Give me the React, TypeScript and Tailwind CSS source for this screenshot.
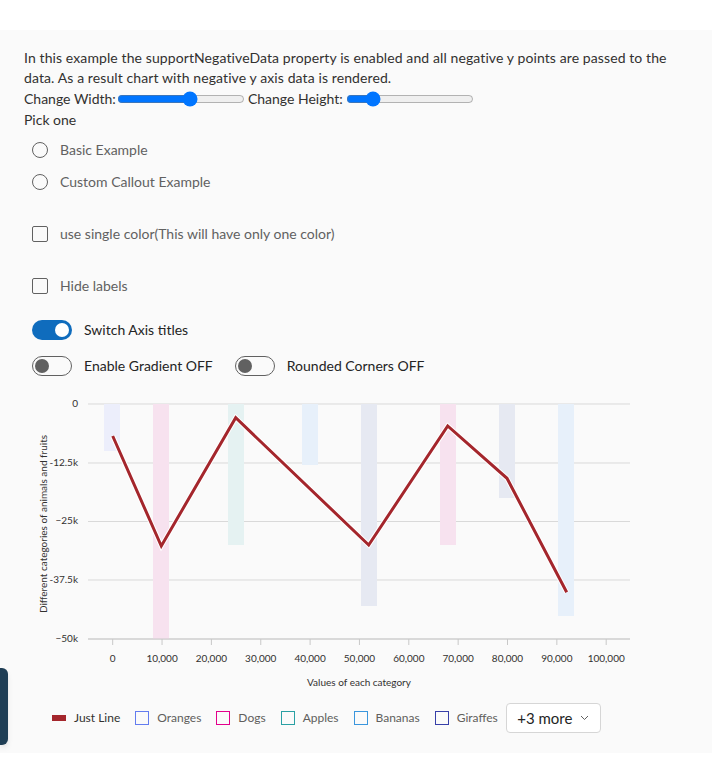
import React from 'react'

const font = { fontFamily: '"Segoe UI", Lato, "Noto Sans", sans-serif' }

const ticks = [0, 10000, 20000, 30000, 40000, 50000, 60000, 70000, 80000, 90000, 100000]
const x0 = 112.7
const step = 49.35

const yLabels = [
  { label: '0', y: 14 },
  { label: '-12.5k', y: 73 },
  { label: '−25k', y: 131.5 },
  { label: '-37.5k', y: 190 },
  { label: '−50k', y: 249 },
]

// bar rects in chart coordinates (top is y=14)
const bars = [
  { x: 104, h: 47, fill: '#eceefb' },
  { x: 153, h: 235, fill: '#f7e2ef' },
  { x: 228, h: 141, fill: '#e5f2f2' },
  { x: 302, h: 61, fill: '#e7f0fa' },
  { x: 361, h: 202, fill: '#e6e9f2' },
  { x: 440, h: 141, fill: '#f7e2ef' },
  { x: 499, h: 94, fill: '#e6e9f2' },
  { x: 558, h: 212, fill: '#e7f0fa' },
]

const points = [
  [112.7, 46],
  [161.3, 156],
  [235.7, 27.7],
  [368.7, 155],
  [447.7, 36],
  [507, 88.3],
  [566.7, 202.3],
]

const legend = [
  { name: 'Oranges', color: '#637cef' },
  { name: 'Dogs', color: '#e3008c' },
  { name: 'Apples', color: '#2aa0a4' },
  { name: 'Bananas', color: '#3a96dd' },
  { name: 'Giraffes', color: '#373fa8' },
]

const Radio = ({ label }: { label: string }) => (
  <div className="flex h-8 items-center">
    <span className="ml-2 size-4 rounded-full border border-[#616161]" />
    <span className="ml-3 text-sm text-[#616161]">{label}</span>
  </div>
)

const Check = ({ label }: { label: string }) => (
  <div className="flex h-8 items-center">
    <span className="ml-2 size-4 rounded-[2px] border border-[#616161]" />
    <span className="ml-3 text-sm text-[#616161]">{label}</span>
  </div>
)

const Toggle = ({ on, label }: { on?: boolean; label: string }) => (
  <div className="flex items-center">
    {on ? (
      <span className="flex h-5 w-10 items-center justify-end rounded-full bg-[#0f6cbd] px-[3px]">
        <span className="size-[14px] rounded-full bg-white" />
      </span>
    ) : (
      <span className="flex h-5 w-10 items-center rounded-full border border-[#616161] px-[2px]">
        <span className="size-[14px] rounded-full bg-[#616161]" />
      </span>
    )}
    <span className="ml-3 text-sm text-[#242424]">{label}</span>
  </div>
)

export default function App() {
  const line = points.map((p) => p.join(',')).join(' ')
  return (
    <div className="min-h-[783px] bg-white pt-[30px] text-[#323130]" style={font}>
      <div className="relative bg-[#fafafa] pt-[18px] pb-[20px]">
        <div className="px-6 text-sm leading-5">
          <p className="w-[664px] tracking-[0.1px]">
            In this example the supportNegativeData property is enabled and all negative y points are passed to the
            data. As a result chart with negative y axis data is rendered.
          </p>
          <div className="flex h-[21px] items-center">
            <span>Change Width:</span>
            <input type="range" defaultValue={58} className="my-0 ml-[1px] mr-[3px] w-[128px]" />
            <span>Change Height:</span>
            <input type="range" defaultValue={17} className="my-0 ml-[3px] w-[128px]" />
          </div>
          <p className="mt-[1px]">Pick one</p>
        </div>

        <div className="mt-1 px-6">
          <Radio label="Basic Example" />
          <Radio label="Custom Callout Example" />
          <div className="mt-5">
            <Check label="use single color(This will have only one color)" />
          </div>
          <div className="mt-5">
            <Check label="Hide labels" />
          </div>
          <div className="mt-[18px] ml-2">
            <Toggle on label="Switch Axis titles" />
          </div>
          <div className="mt-4 ml-2 flex gap-[22px]">
            <Toggle label="Enable Gradient OFF" />
            <Toggle label="Rounded Corners OFF" />
          </div>
        </div>

        <svg width="712" height="305" className="mt-[14px] block" fontFamily='"Segoe UI", Lato, "Noto Sans", sans-serif'>
          {yLabels.map((l) => (
            <g key={l.label}>
              <line x1="88" x2="630" y1={l.y} y2={l.y} stroke="#d9d9d9" strokeWidth="1" />
              <text x="78" y={l.y} textAnchor="end" dominantBaseline="middle" fontSize="10" fill="#323130">
                {l.label}
              </text>
            </g>
          ))}
          {bars.map((b, i) => (
            <rect key={i} x={b.x} y={14} width="16" height={b.h} fill={b.fill} />
          ))}
          <line x1="88" x2="630" y1="249" y2="249" stroke="#c8c8c8" />
          {ticks.map((t, i) => (
            <g key={t}>
              <line x1={x0 + i * step} x2={x0 + i * step} y1="249" y2="255" stroke="#c8c8c8" />
              <text x={x0 + i * step} y="269" textAnchor="middle" dominantBaseline="middle" fontSize="10" fill="#323130">
                {t.toLocaleString('en-US')}
              </text>
            </g>
          ))}
          <polyline points={line} fill="none" stroke="#ffffff" strokeWidth="5" strokeLinejoin="miter" />
          <polyline points={line} fill="none" stroke="#a4262c" strokeWidth="3" strokeLinejoin="miter" />
          <text x="359" y="293" textAnchor="middle" dominantBaseline="middle" fontSize="10" fill="#323130">
            Values of each category
          </text>
          <text
            x="0"
            y="0"
            transform="translate(44 134) rotate(-90)"
            textAnchor="middle"
            dominantBaseline="middle"
            fontSize="10"
            fill="#323130"
          >
            Different categories of animals and fruits
          </text>
        </svg>

        <div className="mt-2 flex h-[30px] items-center pl-[52px] text-[12px]">
          <span className="h-[6px] w-[14px] bg-[#a4262c]" />
          <span className="ml-2 text-[#323130]">Just Line</span>
          {legend.map((l) => (
            <div key={l.name} className="ml-[15px] flex items-center">
              <span className="size-[14px] border" style={{ borderColor: l.color }} />
              <span className="ml-2 text-[#605e5c]">{l.name}</span>
            </div>
          ))}
          <button className="ml-2 flex h-[30px] w-[95px] items-center justify-center gap-2 rounded border border-[#d6d6d6] bg-white text-[15px] text-[#242424]">
            +3 more
            <svg width="9" height="6" viewBox="0 0 9 6">
              <path d="M1 1l3.5 3.5L8 1" fill="none" stroke="#616161" strokeWidth="1" />
            </svg>
          </button>
        </div>

        <div className="absolute left-0 top-[638px] h-[77px] w-2 rounded-r-md bg-[#1f3e55] shadow-md" />
      </div>
    </div>
  )
}
